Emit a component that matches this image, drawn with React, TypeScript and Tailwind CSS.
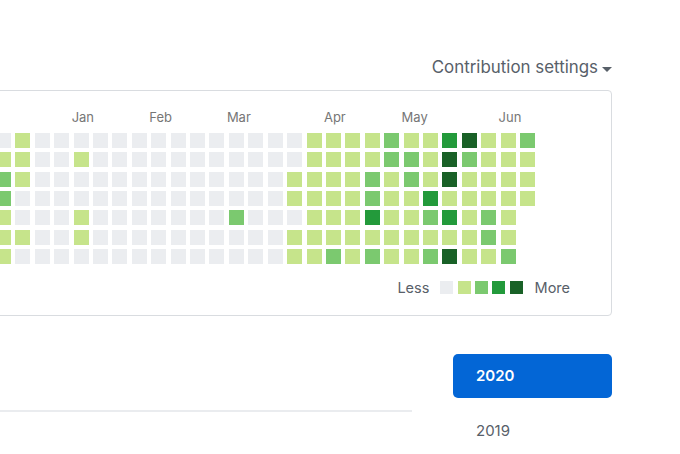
import React from 'react';

const levels = ['bg-[#ebedf0]', 'bg-[#c6e48b]', 'bg-[#7bc96f]', 'bg-[#239a3b]', 'bg-[#196127]'];

// one entry per week, Sunday first
const weeks: number[][] = [
  [0, 1, 2, 2, 1, 1, 1],
  [1, 1, 1, 0, 0, 1, 0],
  [0, 0, 0, 0, 0, 0, 0],
  [0, 0, 0, 0, 0, 0, 0],
  [0, 1, 0, 0, 1, 1, 0],
  [0, 0, 0, 0, 0, 0, 0],
  [0, 0, 0, 0, 0, 0, 0],
  [0, 0, 0, 0, 0, 0, 0],
  [0, 0, 0, 0, 0, 0, 0],
  [0, 0, 0, 0, 0, 0, 0],
  [0, 0, 0, 0, 0, 0, 0],
  [0, 0, 0, 0, 0, 0, 0],
  [0, 0, 0, 0, 2, 0, 0],
  [0, 0, 0, 0, 0, 0, 0],
  [0, 0, 0, 0, 0, 0, 0],
  [0, 0, 1, 1, 0, 1, 1],
  [1, 1, 1, 1, 1, 1, 1],
  [1, 1, 1, 1, 1, 1, 2],
  [1, 1, 1, 1, 1, 1, 1],
  [1, 1, 2, 2, 3, 1, 2],
  [2, 2, 1, 1, 1, 1, 1],
  [1, 2, 2, 1, 1, 1, 1],
  [1, 1, 1, 3, 2, 1, 2],
  [3, 4, 4, 1, 3, 1, 4],
  [4, 2, 1, 1, 1, 1, 1],
  [1, 1, 1, 1, 2, 2, 1],
  [1, 1, 1, 1, 1, 1, 2],
  [2, 1, 1, 1],
];

const months = [
  { name: 'Jan', col: 'col-start-5' },
  { name: 'Feb', col: 'col-start-9' },
  { name: 'Mar', col: 'col-start-13' },
  { name: 'Apr', col: 'col-start-18' },
  { name: 'May', col: 'col-start-22' },
  { name: 'Jun', col: 'col-start-27' },
];

const App = () => {
  return (
    <div className="w-[680px] h-[454px] overflow-hidden bg-white font-['Inter',sans-serif]">
      <div className="ml-[-30px] w-[642px] pt-[56px]">
        <div className="flex justify-end items-center h-[24px] text-[16.9px] text-[#586069]">
          <span>Contribution settings</span>
          <span className="ml-[4px] mt-[2px] w-0 h-0 border-x-[5px] border-x-transparent border-t-[5px] border-t-[#586069]" />
        </div>

        <div className="mt-[10px] h-[226px] border border-[#d9dce0] rounded-[4px] pl-[25px] pt-[18px] pr-[41px]">
          <div className="grid grid-cols-[repeat(28,15px)] gap-x-[4.42px] h-[16px] text-[13px] leading-[16px] text-[#767676]">
            {months.map((m) => (
              <span key={m.name} className={`${m.col} row-start-1 whitespace-nowrap ml-[-2px]`}>
                {m.name}
              </span>
            ))}
          </div>

          <div className="mt-[8px] flex gap-x-[4.42px]">
            {weeks.map((week, i) => (
              <div key={i} className="flex flex-col gap-y-[4.33px]">
                {week.map((lvl, j) => (
                  <div key={j} className={`w-[15px] h-[15px] ${levels[lvl]}`} />
                ))}
              </div>
            ))}
          </div>

          <div className="mt-[16px] flex justify-end items-center h-[16px] text-[14.5px] text-[#586069]">
            <span className="mr-[11px]">Less</span>
            <div className="flex gap-x-[4.3px]">
              {levels.map((c) => (
                <div key={c} className={`w-[13px] h-[13px] ${c}`} />
              ))}
            </div>
            <span className="ml-[12px]">More</span>
          </div>
        </div>
      </div>

      <div className="mt-[38px] flex">
        <div className="w-[412px] h-[58px] border-b-2 border-[#eaecef]" />
        <div className="ml-[41px] w-[159px]">
          <div className="h-[44px] rounded-[5px] bg-[#0366d6] px-[23px] flex items-center text-[15px] font-semibold text-white">
            2020
          </div>
          <div className="mt-[21px] px-[23px] h-[24px] flex items-center text-[15px] text-[#586069]">
            2019
          </div>
        </div>
      </div>
    </div>
  );
};

export default App;
